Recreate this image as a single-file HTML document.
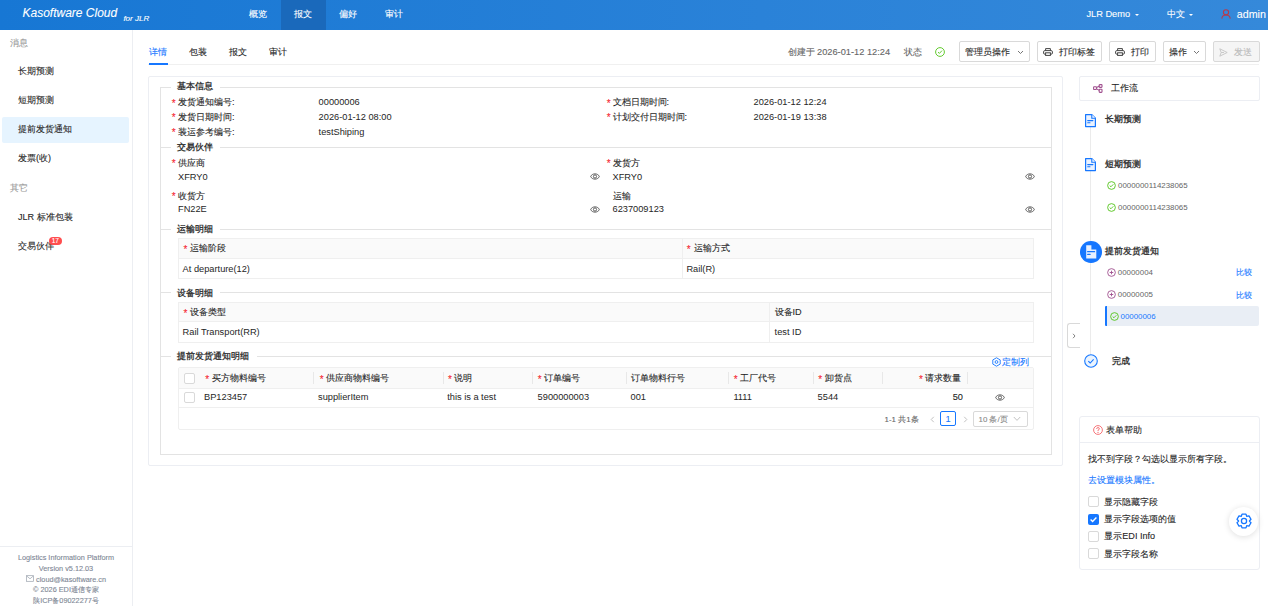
<!DOCTYPE html>
<html><head><meta charset="utf-8">
<style>
*{box-sizing:border-box;margin:0;padding:0}
html,body{width:1268px;height:606px;overflow:hidden;background:#fff}
body{position:relative;font-family:"Liberation Sans",sans-serif;font-size:9.1px;color:#262626}
.a{position:absolute;white-space:nowrap;line-height:14px;-webkit-text-stroke-width:0.1px}
.g{color:#999}
.l{color:#262626}
.b{font-weight:600;color:#3a3a3a;-webkit-text-stroke-width:0}
.w{color:#fff}
.cb{position:absolute;width:11px;height:11px;border:1px solid #d9d9d9;border-radius:2px;background:#fff}
.bt{position:absolute;top:41px;height:21px;border:1px solid #d9d9d9;border-radius:2px;background:#fff}
</style></head><body>

<div style="position:absolute;left:0px;top:0px;width:1268px;height:30px;background:linear-gradient(90deg,#1777d4 0%,#2a82d8 60%,#3589da 100%)"></div>
<div class="a w" style="left:22.5px;top:5.8px;font-size:12px;font-style:italic">Kasoftware Cloud</div>
<div class="a w" style="left:123.4px;top:12.7px;font-size:8px;line-height:12px;font-style:italic">for JLR</div>
<div style="position:absolute;left:281px;top:0px;width:45px;height:30px;background:#1a69bb"></div>
<div class="a w" style="left:248.7px;top:7.10px;font-size:9.1px;">概览</div>
<div class="a w" style="left:294px;top:7.10px;font-size:9.1px;">报文</div>
<div class="a w" style="left:339.4px;top:7.10px;font-size:9.1px;">偏好</div>
<div class="a w" style="left:385px;top:7.10px;font-size:9.1px;">审计</div>
<div class="a w" style="left:1086.4px;top:7px;font-size:9.25px">JLR Demo</div>
<div style="position:absolute;left:1134.8px;top:13.5px;width:0px;height:0px;border-left:2px solid transparent;border-right:2px solid transparent;border-top:2.5px solid #fff"></div>
<div class="a w" style="left:1166.8px;top:6.80px;font-size:9.1px;">中文</div>
<div style="position:absolute;left:1189px;top:13.5px;width:0px;height:0px;border-left:2px solid transparent;border-right:2px solid transparent;border-top:2.5px solid #fff"></div>
<svg style="position:absolute;left:1221px;top:8.5px" width="10" height="10" viewBox="0 0 10 10"><circle cx="5" cy="3.3" r="2.6" fill="none" stroke="#b83a4b" stroke-width="1.1"/><path d="M0.8 9.6 Q1.2 6 5 6 Q8.8 6 9.2 9.6" fill="none" stroke="#b83a4b" stroke-width="1.1"/></svg>
<div class="a w" style="left:1236.8px;top:6.5px;font-size:10.7px">admin</div>
<div style="position:absolute;left:132px;top:30px;width:1px;height:576px;background:#eceef2"></div>
<div class="a g" style="left:10.4px;top:35.70px;font-size:9.1px;">消息</div>
<div style="position:absolute;left:2px;top:116.6px;width:127px;height:26.6px;background:#e6f4ff;border-radius:2px"></div>
<div class="a " style="left:18px;top:64.10px;font-size:9.1px;">长期预测</div>
<div class="a " style="left:18px;top:93.20px;font-size:9.1px;">短期预测</div>
<div class="a " style="left:18px;top:122.30px;font-size:9.1px;">提前发货通知</div>
<div class="a " style="left:18px;top:151.40px;font-size:9.1px;">发票(收)</div>
<div class="a g" style="left:10.3px;top:181.20px;font-size:9.1px;">其它</div>
<div class="a " style="left:18px;top:209.80px;font-size:9.1px;">JLR 标准包装</div>
<div class="a " style="left:18px;top:239.20px;font-size:9.1px;">交易伙伴</div>
<div style="position:absolute;left:48.9px;top:236.9px;width:12.8px;height:8.4px;border-radius:4.2px;background:#ff4d4f"></div>
<div class="a w" style="left:49px;width:12.6px;text-align:center;top:234.3px;font-size:6.6px;-webkit-text-stroke-width:0.1px">17</div>
<div style="position:absolute;left:0px;top:546px;width:132px;height:1px;background:#eceef2"></div>
<div class="a" style="left:0;width:132px;text-align:center;top:551.1px;font-size:7.3px;color:#7d8694">Logistics Information Platform</div>
<div class="a" style="left:0;width:132px;text-align:center;top:561.8px;font-size:7.3px;color:#7d8694">Version v5.12.03</div>
<div class="a" style="left:0;width:132px;text-align:center;top:572.5px;font-size:7.3px;color:#7d8694"><svg width="8" height="7" viewBox="0 0 8 7" style="vertical-align:-0.5px"><rect x="0.5" y="0.7" width="7" height="5.6" fill="none" stroke="#9aa2ad" stroke-width="0.7"/><path d="M0.6 0.9 L4 3.8 L7.4 0.9" fill="none" stroke="#9aa2ad" stroke-width="0.7"/></svg> cloud@kasoftware.cn</div>
<div class="a" style="left:0;width:132px;text-align:center;top:583.2px;font-size:7.3px;color:#7d8694">&copy; 2026 EDI通信专家</div>
<div class="a" style="left:0;width:132px;text-align:center;top:593.9px;font-size:7.3px;color:#7d8694">陕ICP备09022277号</div>
<div class="a " style="left:148.9px;top:44.90px;font-size:9.1px;color:#1677ff">详情</div>
<div class="a " style="left:189px;top:44.90px;font-size:9.1px;">包装</div>
<div class="a " style="left:228.5px;top:44.90px;font-size:9.1px;">报文</div>
<div class="a " style="left:269px;top:44.90px;font-size:9.1px;">审计</div>
<div style="position:absolute;left:148px;top:64px;width:1111px;height:1px;background:#f0f0f0"></div>
<div style="position:absolute;left:148.6px;top:63.4px;width:19px;height:2px;background:#1677ff"></div>
<div class="a" style="left:787.5px;top:44.6px;color:#666">创建于 <span style="font-size:9.25px">2026-01-12 12:24</span></div>
<div class="a " style="left:903.8px;top:44.60px;font-size:9.1px;color:#666">状态</div>
<svg style="position:absolute;left:935px;top:47px" width="10" height="10" viewBox="0 0 10 10"><circle cx="5" cy="5" r="4.4" fill="none" stroke="#52c41a" stroke-width="0.9"/><path d="M3 5.1 L4.4 6.4 L7 3.6" fill="none" stroke="#52c41a" stroke-width="0.9"/></svg>
<div style="position:absolute;left:958.5px;top:40.6px;width:71px;height:21px;border:1px solid #d9d9d9;border-radius:2px"></div>
<div class="a " style="left:965px;top:44.60px;font-size:9.1px;">管理员操作</div>
<svg style="position:absolute;left:1016.5px;top:50px" width="7" height="5" viewBox="0 0 7 5"><path d="M1 1 L3.5 3.5 L6 1" fill="none" stroke="#666" stroke-width="0.9"/></svg>
<div style="position:absolute;left:1036.5px;top:40.6px;width:65px;height:21px;border:1px solid #d9d9d9;border-radius:2px"></div>
<svg style="position:absolute;left:1043.2px;top:48px" width="10" height="8" viewBox="0 0 10 8"><path d="M2.6 2.6 V0.6 H7.4 V2.6" fill="none" stroke="#444" stroke-width="1"/><rect x="0.6" y="2.6" width="8.8" height="3.6" rx="1.2" fill="none" stroke="#444" stroke-width="1"/><rect x="2.6" y="4.8" width="4.8" height="2.6" fill="#fff" stroke="#444" stroke-width="1"/></svg>
<div class="a " style="left:1058.7px;top:44.60px;font-size:9.1px;">打印标签</div>
<div style="position:absolute;left:1108.5px;top:40.6px;width:47px;height:21px;border:1px solid #d9d9d9;border-radius:2px"></div>
<svg style="position:absolute;left:1115px;top:48px" width="10" height="8" viewBox="0 0 10 8"><path d="M2.6 2.6 V0.6 H7.4 V2.6" fill="none" stroke="#444" stroke-width="1"/><rect x="0.6" y="2.6" width="8.8" height="3.6" rx="1.2" fill="none" stroke="#444" stroke-width="1"/><rect x="2.6" y="4.8" width="4.8" height="2.6" fill="#fff" stroke="#444" stroke-width="1"/></svg>
<div class="a " style="left:1130.5px;top:44.60px;font-size:9.1px;">打印</div>
<div style="position:absolute;left:1162.5px;top:40.6px;width:43px;height:21px;border:1px solid #d9d9d9;border-radius:2px"></div>
<div class="a " style="left:1169px;top:44.60px;font-size:9.1px;">操作</div>
<svg style="position:absolute;left:1192.5px;top:50px" width="7" height="5" viewBox="0 0 7 5"><path d="M1 1 L3.5 3.5 L6 1" fill="none" stroke="#666" stroke-width="0.9"/></svg>
<div style="position:absolute;left:1212.5px;top:40.6px;width:47px;height:21px;border:1px solid #d9d9d9;border-radius:2px;background:#f5f5f5"></div>
<svg style="position:absolute;left:1218.8px;top:47.8px" width="9" height="9" viewBox="0 0 9 9"><path d="M0.8 0.8 L8.2 4.5 L0.8 8.2 L2.2 4.5 Z M2.2 4.5 H5" fill="none" stroke="#c4c4c4" stroke-width="0.9" stroke-linejoin="round"/></svg>
<div class="a " style="left:1234.2px;top:44.60px;font-size:9.1px;color:#bbb">发送</div>
<div style="position:absolute;left:148px;top:76px;width:915px;height:390px;border:1px solid #eceef3;border-radius:2px"></div>
<div style="position:absolute;left:160px;top:87px;width:1px;height:368px;background:#e3e3e3"></div>
<div style="position:absolute;left:1051px;top:87px;width:1px;height:368px;background:#e3e3e3"></div>
<div style="position:absolute;left:160px;top:454px;width:892px;height:1px;background:#e3e3e3"></div>
<div style="position:absolute;left:160px;top:87px;width:11px;height:1px;background:#e3e3e3"></div>
<div style="position:absolute;left:220px;top:87px;width:831px;height:1px;background:#e3e3e3"></div>
<div style="position:absolute;left:160px;top:147px;width:11px;height:1px;background:#e3e3e3"></div>
<div style="position:absolute;left:220px;top:147px;width:831px;height:1px;background:#e3e3e3"></div>
<div style="position:absolute;left:160px;top:229px;width:11px;height:1px;background:#e3e3e3"></div>
<div style="position:absolute;left:220px;top:229px;width:831px;height:1px;background:#e3e3e3"></div>
<div style="position:absolute;left:160px;top:292px;width:11px;height:1px;background:#e3e3e3"></div>
<div style="position:absolute;left:220px;top:292px;width:831px;height:1px;background:#e3e3e3"></div>
<div style="position:absolute;left:160px;top:356px;width:11px;height:1px;background:#e3e3e3"></div>
<div style="position:absolute;left:257px;top:356px;width:794px;height:1px;background:#e3e3e3"></div>
<div class="a b" style="left:177px;top:79.40px;font-size:9.1px;">基本信息</div>
<div class="a b" style="left:177px;top:140.00px;font-size:9.1px;">交易伙伴</div>
<div class="a b" style="left:177px;top:222.00px;font-size:9.1px;">运输明细</div>
<div class="a b" style="left:177px;top:285.50px;font-size:9.1px;">设备明细</div>
<div class="a b" style="left:177px;top:349.00px;font-size:9.1px;">提前发货通知明细</div>
<div class="a" style="left:171.8px;top:96.90px;font-size:10px;color:#f5222d">*</div>
<div class="a l" style="left:178px;top:95.40px;font-size:9.1px;">发货通知编号:</div>
<div class="a " style="left:318.6px;top:95.40px;font-size:9.25px;-webkit-text-stroke-width:0;">00000006</div>
<div class="a" style="left:171.8px;top:111.40px;font-size:10px;color:#f5222d">*</div>
<div class="a l" style="left:178px;top:109.90px;font-size:9.1px;">发货日期时间:</div>
<div class="a " style="left:318.6px;top:109.90px;font-size:9.25px;-webkit-text-stroke-width:0;">2026-01-12 08:00</div>
<div class="a" style="left:171.8px;top:126.00px;font-size:10px;color:#f5222d">*</div>
<div class="a l" style="left:178px;top:124.50px;font-size:9.1px;">装运参考编号:</div>
<div class="a " style="left:318.6px;top:124.50px;font-size:9.25px;-webkit-text-stroke-width:0;">testShiping</div>
<div class="a" style="left:606.8px;top:96.90px;font-size:10px;color:#f5222d">*</div>
<div class="a l" style="left:612.5px;top:95.40px;font-size:9.1px;">文档日期时间:</div>
<div class="a " style="left:753.5px;top:95.40px;font-size:9.25px;-webkit-text-stroke-width:0;">2026-01-12 12:24</div>
<div class="a" style="left:606.8px;top:111.40px;font-size:10px;color:#f5222d">*</div>
<div class="a l" style="left:612.5px;top:109.90px;font-size:9.1px;">计划交付日期时间:</div>
<div class="a " style="left:753.5px;top:109.90px;font-size:9.25px;-webkit-text-stroke-width:0;">2026-01-19 13:38</div>
<div class="a" style="left:171.8px;top:157.40px;font-size:10px;color:#f5222d">*</div>
<div class="a l" style="left:178px;top:155.90px;font-size:9.1px;">供应商</div>
<div class="a " style="left:178px;top:169.70px;font-size:9.25px;-webkit-text-stroke-width:0;">XFRY0</div>
<div class="a" style="left:171.8px;top:190.10px;font-size:10px;color:#f5222d">*</div>
<div class="a l" style="left:178px;top:188.60px;font-size:9.1px;">收货方</div>
<div class="a " style="left:178px;top:202.40px;font-size:9.25px;-webkit-text-stroke-width:0;">FN22E</div>
<div class="a" style="left:606.8px;top:157.40px;font-size:10px;color:#f5222d">*</div>
<div class="a l" style="left:612.5px;top:155.90px;font-size:9.1px;">发货方</div>
<div class="a " style="left:612.5px;top:169.70px;font-size:9.25px;-webkit-text-stroke-width:0;">XFRY0</div>
<div class="a l" style="left:612.5px;top:188.60px;font-size:9.1px;">运输</div>
<div class="a " style="left:612.5px;top:202.40px;font-size:9.25px;-webkit-text-stroke-width:0;">6237009123</div>
<svg style="position:absolute;left:589.5px;top:173.2px" width="10" height="7" viewBox="0 0 10 7"><path d="M0.7 3.5 C1.9 0 8.1 0 9.3 3.5 C8.1 7 1.9 7 0.7 3.5 Z" fill="none" stroke="#555" stroke-width="0.95"/><circle cx="5" cy="3.5" r="1.6" fill="none" stroke="#555" stroke-width="0.95"/></svg>
<svg style="position:absolute;left:1024.5px;top:173.2px" width="10" height="7" viewBox="0 0 10 7"><path d="M0.7 3.5 C1.9 0 8.1 0 9.3 3.5 C8.1 7 1.9 7 0.7 3.5 Z" fill="none" stroke="#555" stroke-width="0.95"/><circle cx="5" cy="3.5" r="1.6" fill="none" stroke="#555" stroke-width="0.95"/></svg>
<svg style="position:absolute;left:589.5px;top:205.9px" width="10" height="7" viewBox="0 0 10 7"><path d="M0.7 3.5 C1.9 0 8.1 0 9.3 3.5 C8.1 7 1.9 7 0.7 3.5 Z" fill="none" stroke="#555" stroke-width="0.95"/><circle cx="5" cy="3.5" r="1.6" fill="none" stroke="#555" stroke-width="0.95"/></svg>
<svg style="position:absolute;left:1024.5px;top:205.9px" width="10" height="7" viewBox="0 0 10 7"><path d="M0.7 3.5 C1.9 0 8.1 0 9.3 3.5 C8.1 7 1.9 7 0.7 3.5 Z" fill="none" stroke="#555" stroke-width="0.95"/><circle cx="5" cy="3.5" r="1.6" fill="none" stroke="#555" stroke-width="0.95"/></svg>
<div style="position:absolute;left:178px;top:238px;width:856px;height:41px;border:1px solid #efefef"></div>
<div style="position:absolute;left:179px;top:239px;width:854px;height:19.5px;background:#fafafa"></div>
<div style="position:absolute;left:179px;top:258px;width:854px;height:1px;background:#efefef"></div>
<div style="position:absolute;left:682px;top:239px;width:1px;height:39px;background:#efefef"></div>
<div class="a" style="left:183.5px;top:242.80px;font-size:10px;color:#f5222d">*</div>
<div class="a l" style="left:190px;top:241.30px;font-size:9.1px;">运输阶段</div>
<div class="a" style="left:686.8px;top:242.80px;font-size:10px;color:#f5222d">*</div>
<div class="a l" style="left:693.5px;top:241.30px;font-size:9.1px;">运输方式</div>
<div class="a " style="left:182.6px;top:261.90px;font-size:9.25px;-webkit-text-stroke-width:0;">At departure(12)</div>
<div class="a " style="left:686.4px;top:261.90px;font-size:9.25px;-webkit-text-stroke-width:0;">Rail(R)</div>
<div style="position:absolute;left:178px;top:302px;width:856px;height:41px;border:1px solid #efefef"></div>
<div style="position:absolute;left:179px;top:303px;width:854px;height:18.5px;background:#fafafa"></div>
<div style="position:absolute;left:179px;top:321px;width:854px;height:1px;background:#efefef"></div>
<div style="position:absolute;left:769px;top:303px;width:1px;height:39px;background:#efefef"></div>
<div class="a" style="left:183.5px;top:306.80px;font-size:10px;color:#f5222d">*</div>
<div class="a l" style="left:190px;top:305.30px;font-size:9.1px;">设备类型</div>
<div class="a l" style="left:774.6px;top:305.30px;font-size:9.1px;">设备ID</div>
<div class="a " style="left:182.6px;top:325.00px;font-size:9.25px;-webkit-text-stroke-width:0;">Rail Transport(RR)</div>
<div class="a " style="left:774.6px;top:325.00px;font-size:9.25px;-webkit-text-stroke-width:0;">test ID</div>
<div style="position:absolute;left:178px;top:367px;width:856px;height:63px;border:1px solid #efefef;border-radius:2px"></div>
<div style="position:absolute;left:179px;top:368px;width:854px;height:20px;background:#fafafa"></div>
<div style="position:absolute;left:179px;top:388px;width:854px;height:1px;background:#efefef"></div>
<div style="position:absolute;left:179px;top:407px;width:854px;height:1px;background:#efefef"></div>
<div style="position:absolute;left:313px;top:372px;width:1px;height:12px;background:#e8e8e8"></div>
<div style="position:absolute;left:443px;top:372px;width:1px;height:12px;background:#e8e8e8"></div>
<div style="position:absolute;left:532px;top:372px;width:1px;height:12px;background:#e8e8e8"></div>
<div style="position:absolute;left:626px;top:372px;width:1px;height:12px;background:#e8e8e8"></div>
<div style="position:absolute;left:728px;top:372px;width:1px;height:12px;background:#e8e8e8"></div>
<div style="position:absolute;left:813px;top:372px;width:1px;height:12px;background:#e8e8e8"></div>
<div style="position:absolute;left:882px;top:372px;width:1px;height:12px;background:#e8e8e8"></div>
<div style="position:absolute;left:967px;top:372px;width:1px;height:12px;background:#e8e8e8"></div>
<div style="position:absolute;left:184px;top:373px;width:11px;height:11px;border:1px solid #d9d9d9;border-radius:2px;background:#fff"></div>
<div style="position:absolute;left:184px;top:392.4px;width:11px;height:11px;border:1px solid #d9d9d9;border-radius:2px;background:#fff"></div>
<div class="a" style="left:205.2px;top:372.70px;font-size:10px;color:#f5222d">*</div>
<div class="a l" style="left:211.5px;top:371.20px;font-size:9.1px;">买方物料编号</div>
<div class="a" style="left:319.7px;top:372.70px;font-size:10px;color:#f5222d">*</div>
<div class="a l" style="left:326.0px;top:371.20px;font-size:9.1px;">供应商物料编号</div>
<div class="a" style="left:447.9px;top:372.70px;font-size:10px;color:#f5222d">*</div>
<div class="a l" style="left:454.2px;top:371.20px;font-size:9.1px;">说明</div>
<div class="a" style="left:537.8px;top:372.70px;font-size:10px;color:#f5222d">*</div>
<div class="a l" style="left:544.0999999999999px;top:371.20px;font-size:9.1px;">订单编号</div>
<div class="a l" style="left:631.3px;top:371.20px;font-size:9.1px;">订单物料行号</div>
<div class="a" style="left:733.7px;top:372.70px;font-size:10px;color:#f5222d">*</div>
<div class="a l" style="left:740.0px;top:371.20px;font-size:9.1px;">工厂代号</div>
<div class="a" style="left:818.2px;top:372.70px;font-size:10px;color:#f5222d">*</div>
<div class="a l" style="left:824.5px;top:371.20px;font-size:9.1px;">卸货点</div>
<div class="a" style="left:919.0px;top:372.70px;font-size:10px;color:#f5222d">*</div>
<div class="a l" style="left:925.3px;top:371.20px;font-size:9.1px;">请求数量</div>
<div class="a " style="left:204px;top:389.80px;font-size:9.25px;-webkit-text-stroke-width:0;">BP123457</div>
<div class="a " style="left:318px;top:389.80px;font-size:9.25px;-webkit-text-stroke-width:0;">supplierItem</div>
<div class="a " style="left:447.2px;top:389.80px;font-size:9.25px;-webkit-text-stroke-width:0;">this is a test</div>
<div class="a " style="left:537.6px;top:389.80px;font-size:9.25px;-webkit-text-stroke-width:0;">5900000003</div>
<div class="a " style="left:630.5px;top:389.80px;font-size:9.25px;-webkit-text-stroke-width:0;">001</div>
<div class="a " style="left:733.4px;top:389.80px;font-size:9.25px;-webkit-text-stroke-width:0;">1111</div>
<div class="a " style="left:817.6px;top:389.80px;font-size:9.25px;-webkit-text-stroke-width:0;">5544</div>
<div class="a" style="left:900px;width:63px;text-align:right;top:389.8px;font-size:9.25px">50</div>
<svg style="position:absolute;left:994.5px;top:394.0px" width="10" height="7" viewBox="0 0 10 7"><path d="M0.7 3.5 C1.9 0 8.1 0 9.3 3.5 C8.1 7 1.9 7 0.7 3.5 Z" fill="none" stroke="#555" stroke-width="0.95"/><circle cx="5" cy="3.5" r="1.6" fill="none" stroke="#555" stroke-width="0.95"/></svg>
<div class="a" style="left:884.6px;top:412.6px;font-size:7.9px;color:#666">1-1 共1条</div>
<svg style="position:absolute;left:930px;top:415.5px" width="5" height="7" viewBox="0 0 5 7"><path d="M3.8 0.8 L1.2 3.5 L3.8 6.2" fill="none" stroke="#bbb" stroke-width="0.9"/></svg>
<div style="position:absolute;left:940.2px;top:410.7px;width:15.8px;height:15.8px;border:1px solid #1677ff;border-radius:2px"></div>
<div class="a" style="left:940.2px;width:15.6px;text-align:center;top:411.6px;font-size:9.25px;color:#1677ff">1</div>
<svg style="position:absolute;left:962.5px;top:415.5px" width="5" height="7" viewBox="0 0 5 7"><path d="M1.2 0.8 L3.8 3.5 L1.2 6.2" fill="none" stroke="#bbb" stroke-width="0.9"/></svg>
<div style="position:absolute;left:973.4px;top:410.8px;width:54.2px;height:15.8px;border:1px solid #d9d9d9;border-radius:2px"></div>
<div class="a" style="left:978.5px;top:412.6px;font-size:7.9px;color:#888">10 条/页</div>
<svg style="position:absolute;left:1013px;top:416px" width="8" height="6" viewBox="0 0 8 6"><path d="M0.8 1 L4 4.4 L7.2 1" fill="none" stroke="#bbb" stroke-width="0.9"/></svg>
<svg style="position:absolute;left:991.5px;top:356.5px" width="9" height="10" viewBox="0 0 9 10"><path d="M4.5 0.8 L8.2 2.9 V7.1 L4.5 9.2 L0.8 7.1 V2.9 Z" fill="none" stroke="#1677ff" stroke-width="0.9" stroke-linejoin="round"/><circle cx="4.5" cy="5" r="1.4" fill="none" stroke="#1677ff" stroke-width="0.9"/></svg>
<div class="a " style="left:1001.5px;top:354.50px;font-size:9.1px;color:#1677ff">定制列</div>
<div style="position:absolute;left:1079px;top:76px;width:181px;height:25px;border:1px solid #eceef3;border-radius:2px"></div>
<svg style="position:absolute;left:1093.3px;top:84.2px" width="10" height="9" viewBox="0 0 10 9"><rect x="0.6" y="2.7" width="2.8" height="2.8" rx="0.6" fill="none" stroke="#a0508f" stroke-width="1.1"/><rect x="6.2" y="0.6" width="2.8" height="2.8" rx="0.6" fill="none" stroke="#a0508f" stroke-width="1.1"/><rect x="6.2" y="5.2" width="2.8" height="3.2" rx="0.6" fill="none" stroke="#a0508f" stroke-width="1.1"/><path d="M3.4 3.6 L6.2 2.2 M3.4 4.6 L6.2 6.4" stroke="#a0508f" stroke-width="1.1"/></svg>
<div class="a " style="left:1110.8px;top:81.20px;font-size:9.1px;">工作流</div>
<div style="position:absolute;left:1090px;top:127px;width:1px;height:228px;background:#ebebeb"></div>
<svg style="position:absolute;left:1085.0px;top:113.8px" width="11" height="14" viewBox="0 0 11 14"><path d="M0.6 0.6 H6.8 L10.4 4.2 V12.6 H0.6 Z" fill="#eaf2ff" stroke="#1677ff" stroke-width="1.2" stroke-linejoin="round"/><path d="M6.8 0.6 V4.2 H10.4" fill="#fff" stroke="#1677ff" stroke-width="1.1"/><path d="M2.7 6.6 H7.9 M2.7 8.7 H5" stroke="#1677ff" stroke-width="1.1" stroke-linecap="round"/></svg>
<div class="a b" style="left:1104.8px;top:112.30px;font-size:9.1px;">长期预测</div>
<svg style="position:absolute;left:1085.0px;top:157.8px" width="11" height="14" viewBox="0 0 11 14"><path d="M0.6 0.6 H6.8 L10.4 4.2 V12.6 H0.6 Z" fill="#eaf2ff" stroke="#1677ff" stroke-width="1.2" stroke-linejoin="round"/><path d="M6.8 0.6 V4.2 H10.4" fill="#fff" stroke="#1677ff" stroke-width="1.1"/><path d="M2.7 6.6 H7.9 M2.7 8.7 H5" stroke="#1677ff" stroke-width="1.1" stroke-linecap="round"/></svg>
<div class="a b" style="left:1104.6px;top:156.80px;font-size:9.1px;">短期预测</div>
<svg style="position:absolute;left:1106.8px;top:180.6px" width="9" height="9" viewBox="0 0 10 10"><circle cx="5" cy="5" r="4.3" fill="none" stroke="#52c41a" stroke-width="1"/><path d="M3 5.1 L4.4 6.4 L7 3.7" fill="none" stroke="#52c41a" stroke-width="1"/></svg>
<div class="a " style="left:1118px;top:178.60px;font-size:7.9px;-webkit-text-stroke-width:0;color:#666">0000000114238065</div>
<svg style="position:absolute;left:1106.8px;top:202.5px" width="9" height="9" viewBox="0 0 10 10"><circle cx="5" cy="5" r="4.3" fill="none" stroke="#52c41a" stroke-width="1"/><path d="M3 5.1 L4.4 6.4 L7 3.7" fill="none" stroke="#52c41a" stroke-width="1"/></svg>
<div class="a " style="left:1118px;top:200.50px;font-size:7.9px;-webkit-text-stroke-width:0;color:#666">0000000114238065</div>
<div style="position:absolute;left:1080px;top:241.2px;width:21.6px;height:21.6px;border-radius:50%;background:#1677ff"></div>
<svg style="position:absolute;left:1085.7px;top:245.2px" width="11" height="14" viewBox="0 0 11 14"><path d="M0.2 0.2 H5.4 V4.6 H10.3 V13.6 H0.2 Z" fill="#e8f1ff"/><path d="M1.6 6.7 H8.6 M1.6 9.3 H4.2" stroke="#1677ff" stroke-width="1.2" stroke-linecap="round"/></svg>
<div class="a b" style="left:1105px;top:244.20px;font-size:9.1px;">提前发货通知</div>
<svg style="position:absolute;left:1107px;top:267.9px" width="9" height="9" viewBox="0 0 10 10"><circle cx="5" cy="5" r="4.3" fill="none" stroke="#a0508f" stroke-width="1"/><path d="M5 3 V7 M3 5 H7" fill="none" stroke="#a0508f" stroke-width="1"/></svg>
<div class="a " style="left:1117.8px;top:265.90px;font-size:7.9px;-webkit-text-stroke-width:0;color:#666">00000004</div>
<div class="a " style="left:1236px;top:266.40px;font-size:7.9px;color:#1677ff">比较</div>
<svg style="position:absolute;left:1107px;top:290.1px" width="9" height="9" viewBox="0 0 10 10"><circle cx="5" cy="5" r="4.3" fill="none" stroke="#a0508f" stroke-width="1"/><path d="M5 3 V7 M3 5 H7" fill="none" stroke="#a0508f" stroke-width="1"/></svg>
<div class="a " style="left:1117.8px;top:288.10px;font-size:7.9px;-webkit-text-stroke-width:0;color:#666">00000005</div>
<div class="a " style="left:1236px;top:288.60px;font-size:7.9px;color:#1677ff">比较</div>
<div style="position:absolute;left:1104.6px;top:305.5px;width:154.6px;height:20.8px;background:#e9eef5;border-left:2.8px solid #1677ff;border-radius:1px 2px 2px 1px"></div>
<svg style="position:absolute;left:1109.7px;top:311.8px" width="9" height="9" viewBox="0 0 10 10"><circle cx="5" cy="5" r="4.3" fill="none" stroke="#52c41a" stroke-width="1"/><path d="M3 5.1 L4.4 6.4 L7 3.7" fill="none" stroke="#52c41a" stroke-width="1"/></svg>
<div class="a " style="left:1120.5px;top:309.80px;font-size:7.9px;-webkit-text-stroke-width:0;color:#1677ff">00000006</div>
<div style="position:absolute;left:1067px;top:323.3px;width:13px;height:25px;border:1px solid #d9d9d9;border-right:none;border-radius:3px 0 0 3px;background:#fff"></div>
<svg style="position:absolute;left:1072px;top:333.2px" width="4" height="6" viewBox="0 0 4 6"><path d="M1 0.8 L3 3 L1 5.2" fill="none" stroke="#666" stroke-width="0.8"/></svg>
<svg style="position:absolute;left:1083.6px;top:354.1px" width="14" height="14" viewBox="0 0 14 14"><circle cx="7" cy="7" r="6.3" fill="#eaf4ff" stroke="#1677ff" stroke-width="1.1"/><path d="M4.3 7.2 L6.2 9 L9.6 5.3" fill="none" stroke="#1677ff" stroke-width="1.1"/></svg>
<div class="a b" style="left:1112.1px;top:353.50px;font-size:9.1px;">完成</div>
<div style="position:absolute;left:1079px;top:416px;width:181px;height:154px;border:1px solid #eceef3;border-radius:3px"></div>
<div style="position:absolute;left:1080px;top:442px;width:179px;height:1px;background:#eceef3"></div>
<svg style="position:absolute;left:1093px;top:425px" width="10" height="10" viewBox="0 0 10 10"><circle cx="5" cy="5" r="4.4" fill="none" stroke="#f5656a" stroke-width="0.9"/><path d="M3.6 3.9 Q3.6 2.6 5 2.6 Q6.4 2.6 6.4 3.8 Q6.4 4.6 5 5.2 V6" fill="none" stroke="#f5656a" stroke-width="0.9"/><circle cx="5" cy="7.4" r="0.55" fill="#f5656a"/></svg>
<div class="a " style="left:1106.3px;top:423.00px;font-size:9.1px;">表单帮助</div>
<div class="a " style="left:1088.2px;top:451.60px;font-size:9.1px;">找不到字段？勾选以显示所有字段。</div>
<div class="a " style="left:1088.2px;top:473.00px;font-size:9.1px;color:#1677ff">去设置模块属性。</div>
<div style="position:absolute;left:1088.2px;top:496.4px;width:10.7px;height:10.7px;border:1px solid #d9d9d9;border-radius:2px"></div>
<div class="a " style="left:1104.3px;top:494.70px;font-size:9.1px;">显示隐藏字段</div>
<div style="position:absolute;left:1088.2px;top:514.1px;width:10.7px;height:10.7px;border-radius:2px;background:#1677ff"></div>
<svg style="position:absolute;left:1088.2px;top:514.1px" width="11" height="11" viewBox="0 0 11 11"><path d="M2.6 5.6 L4.6 7.6 L8.4 3.6" fill="none" stroke="#fff" stroke-width="1.4"/></svg>
<div class="a " style="left:1104.3px;top:512.40px;font-size:9.1px;">显示字段选项的值</div>
<div style="position:absolute;left:1088.2px;top:531.0px;width:10.7px;height:10.7px;border:1px solid #d9d9d9;border-radius:2px"></div>
<div class="a " style="left:1104.3px;top:529.30px;font-size:9.1px;">显示EDI Info</div>
<div style="position:absolute;left:1088.2px;top:548.4000000000001px;width:10.7px;height:10.7px;border:1px solid #d9d9d9;border-radius:2px"></div>
<div class="a " style="left:1104.3px;top:546.70px;font-size:9.1px;">显示字段名称</div>
<div style="position:absolute;left:1229px;top:507px;width:28.5px;height:28.5px;border-radius:50%;background:#fff;box-shadow:0 1px 6px rgba(0,0,0,0.13)"></div>
<svg style="position:absolute;left:1235.5px;top:513.3px" width="16" height="16" viewBox="0 0 16 16"><path d="M5.30 3.32 L6.02 1.08 L9.98 1.08 L10.70 3.32 L13.00 2.82 L14.99 6.26 L13.40 8.00 L14.99 9.74 L13.00 13.18 L10.70 12.68 L9.98 14.92 L6.02 14.92 L5.30 12.68 L3.00 13.18 L1.01 9.74 L2.60 8.00 L1.01 6.26 L3.00 2.82 Z" fill="none" stroke="#1677ff" stroke-width="1.3" stroke-linejoin="round"/><circle cx="8" cy="8" r="2.6" fill="none" stroke="#1677ff" stroke-width="1.3"/></svg>
</body></html>
